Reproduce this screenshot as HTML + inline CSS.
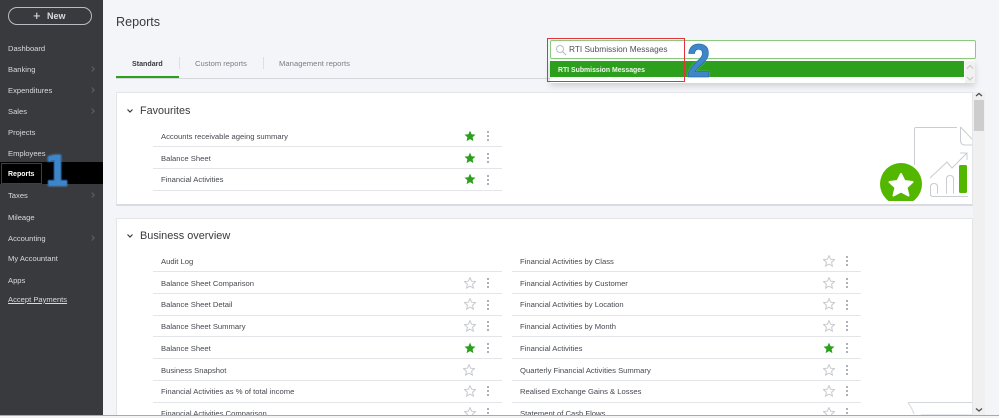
<!DOCTYPE html>
<html><head><meta charset="utf-8">
<style>
html,body{margin:0;padding:0;width:999px;height:418px;overflow:hidden;background:#f4f5f8;font-family:"Liberation Sans",sans-serif;}
#root{position:relative;width:999px;height:418px;overflow:hidden;}
.a{position:absolute;}
.t{position:absolute;white-space:nowrap;line-height:12px;}
.nav{position:absolute;left:8px;margin-top:1px;font-size:7.6px;color:#d6d9de;white-space:nowrap;line-height:12px;}
.car{position:absolute;left:90px;width:3px;height:3px;border-top:1px solid #5f6066;border-right:1px solid #5f6066;transform:rotate(45deg);}
.r{position:absolute;margin-top:1px;font-size:7.65px;color:#45484f;white-space:nowrap;line-height:12px;}
.l{position:absolute;height:1px;background:#e3e5e8;}
.s{position:absolute;width:12px;height:12px;}
.d{position:absolute;width:2px;height:10px;}
</style></head><body><div id="root">

<!-- sidebar -->
<div class="a" style="left:0;top:0;width:103px;height:415px;background:#393a3d"></div>
<div class="a" style="left:8px;top:7px;width:82px;height:16px;border:1px solid #b9bcc2;border-radius:9px"></div>
<div class="t" style="left:33px;top:10px;font-size:13px;color:#eceef1;">+</div>
<div class="t" style="left:47px;top:10px;font-size:9px;font-weight:bold;color:#d9dbe0;">New</div>

<div class="a" style="left:0;top:162px;width:103px;height:22px;background:#000"></div>
<div class="a" style="left:1px;top:163px;width:39px;height:19px;border:1px solid #a0141c"></div>

<div class="nav" style="top:42px">Dashboard</div>
<div class="nav" style="top:63px">Banking</div><div class="car" style="top:67px"></div>
<div class="nav" style="top:84px">Expenditures</div><div class="car" style="top:88px"></div>
<div class="nav" style="top:105px">Sales</div><div class="car" style="top:109px"></div>
<div class="nav" style="top:126px">Projects</div>
<div class="nav" style="top:147px">Employees</div>
<div class="nav" style="top:168px;color:#fff;font-weight:bold;font-size:7px">Reports</div>
<div class="nav" style="top:189px">Taxes</div><div class="car" style="top:193px"></div>
<div class="nav" style="top:211px">Mileage</div>
<div class="nav" style="top:232px">Accounting</div><div class="car" style="top:236px"></div>
<div class="nav" style="top:252px">My Accountant</div>
<div class="nav" style="top:274px">Apps</div>
<div class="nav" style="top:293px;text-decoration:underline">Accept Payments</div>

<!-- header -->
<div class="t" style="left:116px;top:14px;font-size:12.6px;line-height:16px;color:#393a3d;">Reports</div>

<!-- tabs -->
<div class="a" style="left:116px;top:78px;width:857px;height:1px;background:#d4d7dc"></div>
<div class="a" style="left:116px;top:76px;width:63px;height:2px;background:#2ca01c"></div>
<div class="a" style="left:179px;top:57px;width:1px;height:12px;background:#dcdfe3"></div>
<div class="a" style="left:263px;top:57px;width:1px;height:12px;background:#dcdfe3"></div>
<div class="t" style="left:132px;top:58px;font-size:7.1px;font-weight:bold;color:#393a3d;">Standard</div>
<div class="t" style="left:195px;top:58px;font-size:7.6px;color:#7b7e85;">Custom reports</div>
<div class="t" style="left:279px;top:58px;font-size:7.7px;color:#7b7e85;">Management reports</div>

<!-- Favourites card -->
<div class="a" style="left:116px;top:92px;width:857px;height:114px;background:#fff;border:1px solid #e3e5e8;box-sizing:border-box;border-bottom:2px solid #d9dbe0"></div>
<svg class="a" style="left:126px;top:108px" width="8" height="6"><path d="M1.500 1.500 L4 4 L6.500 1.500" fill="none" stroke="#393a3d" stroke-width="1.200"/></svg>
<div class="t" style="left:140px;top:104px;font-size:10.8px;line-height:14px;color:#393a3d;">Favourites</div>

<div class="r" style="left:161px;top:130px">Accounts receivable ageing summary</div>
<div class="l" style="left:153px;top:146px;width:349px"></div>
<div class="r" style="left:161px;top:152px">Balance Sheet</div>
<div class="l" style="left:153px;top:168px;width:349px"></div>
<div class="r" style="left:161px;top:173px">Financial Activities</div>
<div class="l" style="left:153px;top:190px;width:349px"></div>

<svg width="0" height="0" style="position:absolute"><defs>
<path id="st" d="M6 .6 L7.600 4.200 L11.500 4.600 L8.600 7.200 L9.400 11.100 L6 9.100 L2.600 11.100 L3.400 7.200 L.5 4.600 L4.400 4.200 Z"/>
<g id="dots" fill="#aeb1b7"><rect x="0" y="0" width="2" height="2"/><rect x="0" y="4" width="2" height="2"/><rect x="0" y="8" width="2" height="2"/></g>
</defs></svg>

<svg class="s" style="left:464px;top:130px"><use href="#st" fill="#2ca01c"/></svg><svg class="d" style="left:487px;top:131px"><use href="#dots"/></svg>
<svg class="s" style="left:464px;top:152px"><use href="#st" fill="#2ca01c"/></svg><svg class="d" style="left:487px;top:153px"><use href="#dots"/></svg>
<svg class="s" style="left:464px;top:173px"><use href="#st" fill="#2ca01c"/></svg><svg class="d" style="left:487px;top:175px"><use href="#dots"/></svg>

<!-- illustration -->
<svg class="a" style="left:875px;top:120px" width="97" height="81">
<path d="M39.500 45 V9 Q39.500 7.500 41 7.500 H82" fill="none" stroke="#c9ccd1" stroke-width="1"/>
<path d="M85.500 7 V20 Q85.500 25 90 25 H97 M85.500 7 L97 19" fill="none" stroke="#c9ccd1" stroke-width="1"/>
<circle cx="26" cy="64" r="21" fill="#53b700"/>
<path d="M26 54 L29.500 61 L37.500 62 L31.500 67.500 L33.500 75.500 L26 71.500 L18.500 75.500 L20.500 67.500 L14.500 62 L22.500 61 Z" fill="#fff" stroke="#fff" stroke-linejoin="round" stroke-width="2"/>
<path d="M55 58 L72 42 L77 48 L92 33 M85 33 H92 V40" fill="none" stroke="#c9ccd1" stroke-width="1"/>
<path d="M55.500 76 V67 Q55.500 63.500 59 63.500 Q62.500 63.500 62.500 67 V73.500 M71.500 73.500 V59 Q71.500 55.500 75 55.500 Q78.500 55.500 78.500 59 V73.500 M55.500 74 Q55.500 76.500 58 76.500 H93" fill="none" stroke="#c9ccd1" stroke-width="1"/>
<rect x="84" y="45" width="8" height="28" rx="1.500" fill="#53b700"/>
</svg>

<!-- Business overview card -->
<div class="a" style="left:116px;top:218px;width:857px;height:200px;background:#fff;border:1px solid #e3e5e8;box-sizing:border-box"></div>
<svg class="a" style="left:126px;top:233px" width="8" height="6"><path d="M1.500 1.500 L4 4 L6.500 1.500" fill="none" stroke="#393a3d" stroke-width="1.200"/></svg>
<div class="t" style="left:140px;top:229px;font-size:10.900px;line-height:14px;color:#393a3d;">Business overview</div>

<div class="r" style="left:161px;top:255px">Audit Log</div>
<div class="l" style="left:153px;top:271px;width:349px"></div>
<div class="r" style="left:161px;top:277px">Balance Sheet Comparison</div>
<div class="l" style="left:153px;top:293px;width:349px"></div>
<div class="r" style="left:161px;top:298px">Balance Sheet Detail</div>
<div class="l" style="left:153px;top:315px;width:349px"></div>
<div class="r" style="left:161px;top:320px">Balance Sheet Summary</div>
<div class="l" style="left:153px;top:336px;width:349px"></div>
<div class="r" style="left:161px;top:342px">Balance Sheet</div>
<div class="l" style="left:153px;top:358px;width:349px"></div>
<div class="r" style="left:161px;top:364px">Business Snapshot</div>
<div class="l" style="left:153px;top:380px;width:349px"></div>
<div class="r" style="left:161px;top:385px">Financial Activities as % of total income</div>
<div class="l" style="left:153px;top:402px;width:349px"></div>
<div class="r" style="left:161px;top:407px">Financial Activities Comparison</div>

<div class="r" style="left:520px;top:255px">Financial Activities by Class</div>
<div class="l" style="left:512px;top:271px;width:349px"></div>
<div class="r" style="left:520px;top:277px">Financial Activities by Customer</div>
<div class="l" style="left:512px;top:293px;width:349px"></div>
<div class="r" style="left:520px;top:298px">Financial Activities by Location</div>
<div class="l" style="left:512px;top:315px;width:349px"></div>
<div class="r" style="left:520px;top:320px">Financial Activities by Month</div>
<div class="l" style="left:512px;top:336px;width:349px"></div>
<div class="r" style="left:520px;top:342px">Financial Activities</div>
<div class="l" style="left:512px;top:358px;width:349px"></div>
<div class="r" style="left:520px;top:364px">Quarterly Financial Activities Summary</div>
<div class="l" style="left:512px;top:380px;width:349px"></div>
<div class="r" style="left:520px;top:385px">Realised Exchange Gains &amp; Losses</div>
<div class="l" style="left:512px;top:402px;width:349px"></div>
<div class="r" style="left:520px;top:407px">Statement of Cash Flows</div>

<!-- left stars -->
<svg class="s" style="left:464px;top:277px"><use href="#st" fill="none" stroke="#c6c9ce"/></svg><svg class="d" style="left:487px;top:278px"><use href="#dots"/></svg>
<svg class="s" style="left:464px;top:298px"><use href="#st" fill="none" stroke="#c6c9ce"/></svg><svg class="d" style="left:487px;top:300px"><use href="#dots"/></svg>
<svg class="s" style="left:464px;top:320px"><use href="#st" fill="none" stroke="#c6c9ce"/></svg><svg class="d" style="left:487px;top:321px"><use href="#dots"/></svg>
<svg class="s" style="left:464px;top:342px"><use href="#st" fill="#2ca01c"/></svg><svg class="d" style="left:487px;top:343px"><use href="#dots"/></svg>
<svg class="s" style="left:463px;top:364px"><use href="#st" fill="none" stroke="#c6c9ce"/></svg>
<svg class="s" style="left:464px;top:385px"><use href="#st" fill="none" stroke="#c6c9ce"/></svg><svg class="d" style="left:487px;top:386px"><use href="#dots"/></svg>
<svg class="s" style="left:464px;top:407px"><use href="#st" fill="none" stroke="#c6c9ce"/></svg><svg class="d" style="left:487px;top:408px"><use href="#dots"/></svg>

<!-- right stars -->
<svg class="s" style="left:823px;top:255px"><use href="#st" fill="none" stroke="#c6c9ce"/></svg><svg class="d" style="left:846px;top:256px"><use href="#dots"/></svg>
<svg class="s" style="left:823px;top:277px"><use href="#st" fill="none" stroke="#c6c9ce"/></svg><svg class="d" style="left:846px;top:278px"><use href="#dots"/></svg>
<svg class="s" style="left:823px;top:298px"><use href="#st" fill="none" stroke="#c6c9ce"/></svg><svg class="d" style="left:846px;top:300px"><use href="#dots"/></svg>
<svg class="s" style="left:823px;top:320px"><use href="#st" fill="none" stroke="#c6c9ce"/></svg><svg class="d" style="left:846px;top:321px"><use href="#dots"/></svg>
<svg class="s" style="left:823px;top:342px"><use href="#st" fill="#2ca01c"/></svg><svg class="d" style="left:846px;top:343px"><use href="#dots"/></svg>
<svg class="s" style="left:823px;top:364px"><use href="#st" fill="none" stroke="#c6c9ce"/></svg><svg class="d" style="left:846px;top:365px"><use href="#dots"/></svg>
<svg class="s" style="left:823px;top:385px"><use href="#st" fill="none" stroke="#c6c9ce"/></svg><svg class="d" style="left:846px;top:386px"><use href="#dots"/></svg>
<svg class="s" style="left:823px;top:407px"><use href="#st" fill="none" stroke="#c6c9ce"/></svg><svg class="d" style="left:846px;top:408px"><use href="#dots"/></svg>

<!-- feedback tab corner -->
<svg class="a" style="left:905px;top:402px" width="68" height="16"><path d="M3 .5 H67 M3 .5 Q7 6 9 12" fill="none" stroke="#d4d7dc"/><rect x="16" y="12" width="52" height="4" fill="#e8eaed"/></svg>

<!-- scrollbar -->
<div class="a" style="left:973px;top:92px;width:12px;height:326px;background:#f0f0f0"></div>
<div class="a" style="left:974px;top:100px;width:10px;height:31px;background:#cdcdcd"></div>
<svg class="a" style="left:975px;top:92px" width="8" height="6"><path d="M1 4 L4 1.500 L7 4" fill="none" stroke="#505050" stroke-width="1.300"/></svg>
<svg class="a" style="left:975px;top:407px" width="8" height="6"><path d="M1 1.500 L4 4 L7 1.500" fill="none" stroke="#505050" stroke-width="1.300"/></svg>

<!-- search -->
<div class="a" style="left:550px;top:40px;width:424px;height:17px;background:#fff;border:1px solid #8ccb7f;border-radius:2px"></div>
<svg class="a" style="left:555px;top:44px" width="12" height="12"><circle cx="5" cy="5" r="3.500" fill="none" stroke="#babec5" stroke-width="1"/><path d="M7.500 7.500 L11 11" stroke="#babec5" stroke-width="1.200"/></svg>
<div class="t" style="left:569px;top:43px;font-size:8.3px;color:#4f525a;">RTI Submission Messages</div>
<div class="a" style="left:550px;top:60px;width:425px;height:23px;background:#fff;box-shadow:0 3px 6px rgba(0,0,0,.15)"></div>
<div class="a" style="left:550px;top:61px;width:414px;height:16px;background:#2ca01c"></div>
<div class="t" style="left:558px;top:65px;font-size:6.900px;font-weight:bold;color:#f2f7ef;">RTI Submission Messages</div>
<div class="a" style="left:965px;top:61px;width:10px;height:22px;background:#f1f1f1"></div>
<svg class="a" style="left:966px;top:64px" width="8" height="18"><path d="M1 4.500 L4 1.500 L7 4.500" fill="none" stroke="#c4c4c4"/><path d="M1 13 L4 16 L7 13" fill="none" stroke="#c4c4c4"/></svg>
<div class="a" style="left:547px;top:38px;width:136px;height:42px;border:1px solid #e2333d"></div>

<!-- annotation numerals -->
<div class="t" style="left:44px;top:153px;font-family:'DejaVu Sans',sans-serif;font-size:43px;line-height:38px;font-weight:bold;color:#3f86c9;-webkit-text-stroke:.6px #1d5c9c;text-shadow:0 0 2px #8ccbf5;transform-origin:left top;transform:scaleX(.85);">1</div>
<div class="t" style="left:687px;top:42px;font-size:47px;line-height:38px;font-weight:bold;color:#3f86c9;-webkit-text-stroke:.6px #1d5c9c;text-shadow:0 0 2px #a5dcff;transform-origin:left top;transform:scaleX(.9);">2</div>

<!-- bottom line -->
<div class="a" style="left:0;top:415px;width:999px;height:1px;background:#a9a9a9"></div>
<div class="a" style="left:0;top:416px;width:999px;height:2px;background:#f5f5f5"></div>
</div></body></html>
